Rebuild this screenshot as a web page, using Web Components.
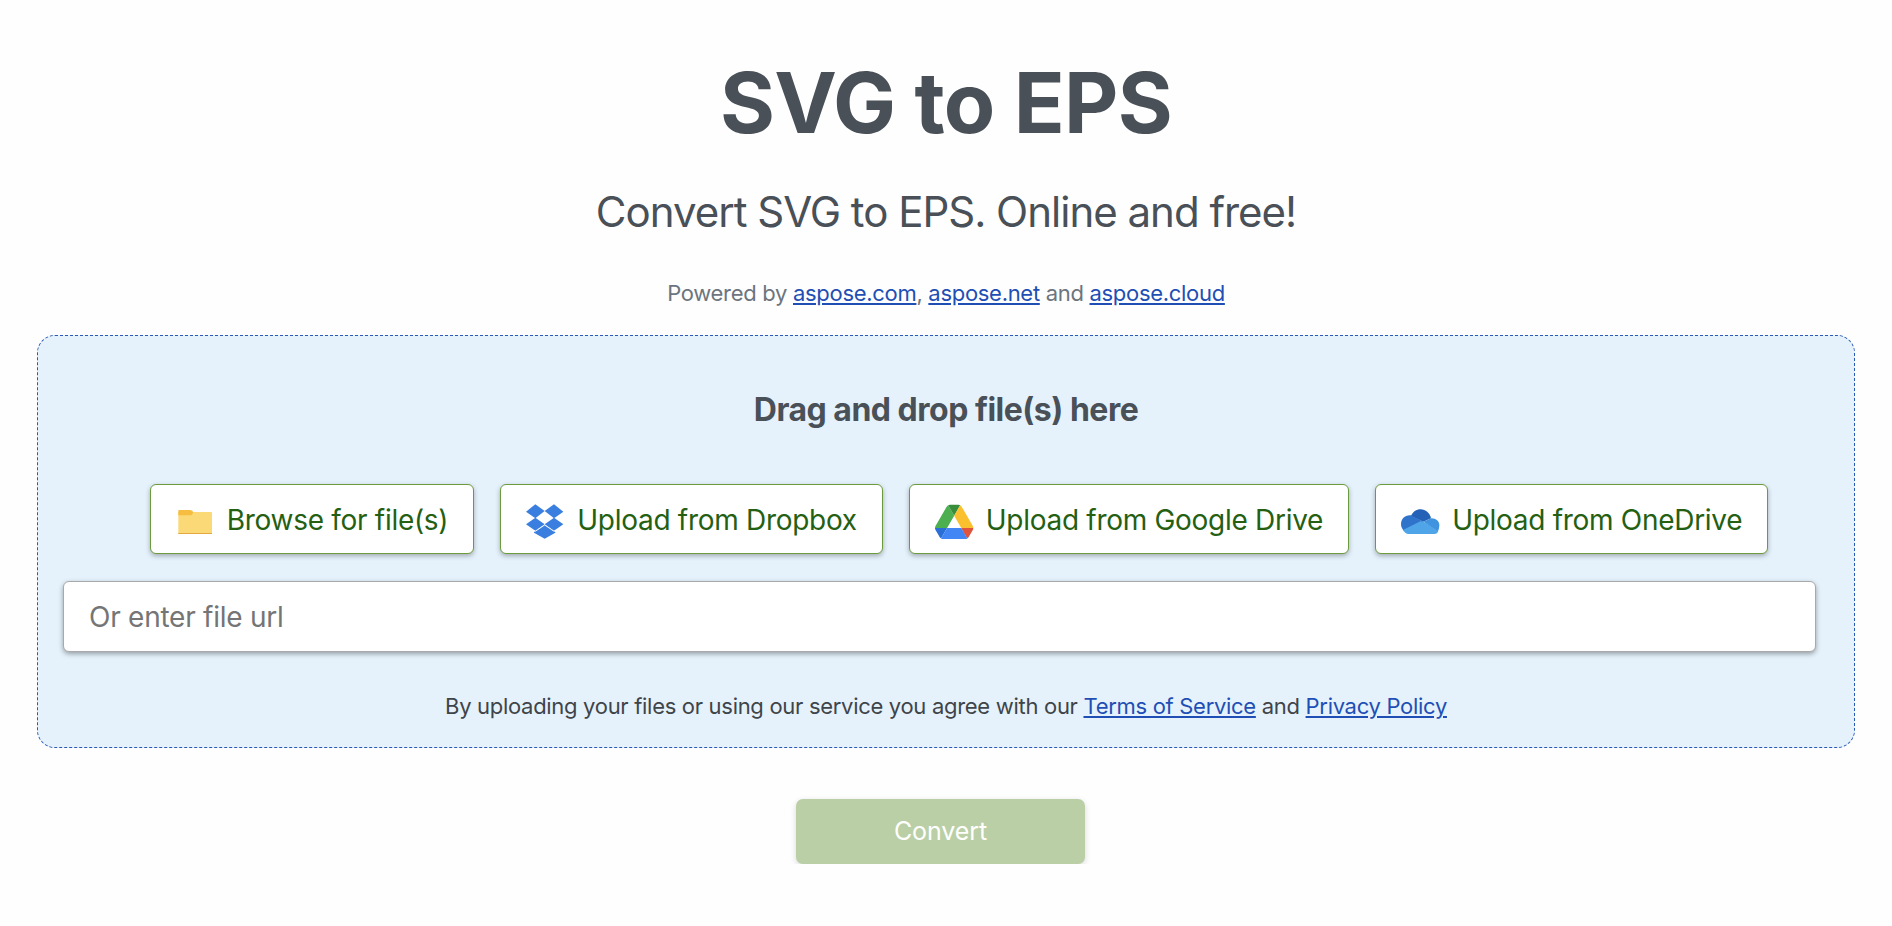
<!DOCTYPE html>
<html lang="en">
<head>
<meta charset="utf-8">
<title>SVG to EPS</title>
<style>
    html, body {
        margin: 0;
        padding: 0;
        background: #fefefe;
        font-family: Inter, "Liberation Sans", sans-serif;
    }
</style>
</head>
<body>
<conv-app></conv-app>

<script>
const LINK_COLOR = '#1f4fb4';

class PageHead extends HTMLElement {
    constructor() {
        super();
        this.shadow = this.attachShadow({mode: 'open'});
    }

    connectedCallback() {
        this.shadow.innerHTML = `
            <style>
                :host {
                    display: block;
                    padding-top: 55px;
                    text-align: center;
                    color: #495057;
                }

                h1 {
                    margin: 0;
                    font-size: 84px;
                    line-height: 96px;
                    font-weight: 700;
                    letter-spacing: -.7px;
                }

                h2 {
                    margin: 33px 0 0;
                    font-size: 42px;
                    line-height: 56px;
                    font-weight: 400;
                    letter-spacing: -1px;
                }

                p {
                    margin: 38px 0 0;
                    font-size: 22px;
                    line-height: 30px;
                    letter-spacing: -.3px;
                    color: #6c757d;
                }

                a {
                    color: ${LINK_COLOR};
                }
            </style>

            <h1>SVG to EPS</h1>
            <h2>Convert SVG to EPS. Online and free!</h2>
            <p>Powered by <a href="#">aspose.com</a>, <a href="#">aspose.net</a> and <a href="#">aspose.cloud</a></p>
        `;
    }
}

class UploadButton extends HTMLElement {
    constructor() {
        super();
        this.shadow = this.attachShadow({mode: 'open'});
    }

    connectedCallback() {
        this.shadow.innerHTML = `
            <style>
                :host {
                    display: flex;
                    align-items: center;
                    gap: 12px;
                    box-sizing: border-box;
                    height: 70px;
                    margin-left: 26px;
                    padding: 2px 25px 0 24px;
                    background: #fff;
                    border: 1px solid #6a9c3f;
                    border-radius: 6px;
                    box-shadow: 0 2px 5px rgba(0, 0, 0, .3);
                    color: #255f12;
                    font-size: 28px;
                    letter-spacing: -.29px;
                    white-space: nowrap;
                }

                ::slotted(svg) {
                    width: 40px;
                    height: 40px;
                    margin-top: 4px;
                    flex: none;
                }
            </style>

            <slot name="icon"></slot>
            <slot></slot>
        `;
    }
}

class UrlInput extends HTMLElement {
    constructor() {
        super();
        this.shadow = this.attachShadow({mode: 'open'});
    }

    connectedCallback() {
        this.shadow.innerHTML = `
            <style>
                :host {
                    display: block;
                    margin-right: 13px;
                }

                input {
                    display: block;
                    box-sizing: border-box;
                    width: 100%;
                    height: 71px;
                    padding: 0 25px;
                    background: #fff;
                    border: 1px solid #a9a9a9;
                    border-radius: 6px;
                    box-shadow: 0 2px 5px rgba(0, 0, 0, .35);
                    font: 28px Inter, sans-serif;
                    letter-spacing: -.25px;
                    outline: none;
                }

                input::placeholder {
                    color: #757575;
                    opacity: 1;
                }
            </style>

            <input type="text" placeholder="${this.getAttribute('placeholder')}">
        `;
    }
}

class DropZone extends HTMLElement {
    constructor() {
        super();
        this.shadow = this.attachShadow({mode: 'open'});
    }

    connectedCallback() {
        this.shadow.innerHTML = `
            <style>
                :host {
                    display: block;
                    box-sizing: border-box;
                    height: 413px;
                    margin: 27px 37px 0;
                    padding: 54px 25px 0;
                    background: #e5f2fc;
                    border: 1px dashed #2a5ab5;
                    border-radius: 18px;
                    text-align: center;
                }

                h3 {
                    margin: 0 0 54px;
                    font-size: 32px;
                    line-height: 40px;
                    font-weight: 700;
                    letter-spacing: -.5px;
                    color: #495057;
                }

                .buttons {
                    display: flex;
                    justify-content: center;
                    margin-bottom: 27px;
                }

                p {
                    margin: 39px 0 0;
                    font-size: 22px;
                    line-height: 30px;
                    letter-spacing: -.3px;
                    color: #3f4449;
                }

                a {
                    color: ${LINK_COLOR};
                }
            </style>

            <h3>Drag and drop file(s) here</h3>
            <div class="buttons"><slot></slot></div>
            <url-input placeholder="Or enter file url"></url-input>
            <p>By uploading your files or using our service you agree with our <a href="#">Terms of Service</a> and <a href="#">Privacy Policy</a></p>
        `;
    }
}

class ConvertButton extends HTMLElement {
    constructor() {
        super();
        this.shadow = this.attachShadow({mode: 'open'});
    }

    connectedCallback() {
        this.shadow.innerHTML = `
            <style>
                :host {
                    display: flex;
                    justify-content: center;
                    margin-top: 51px;
                    padding-right: 11px;
                }

                button {
                    width: 289px;
                    height: 65px;
                    padding: 0 0 2px;
                    background: #bacfa5;
                    border: 0;
                    border-radius: 7px;
                    box-shadow: 0 2px 6px rgba(0, 0, 0, .15);
                    color: #fff;
                    font: 25px Inter, sans-serif;
                    letter-spacing: -.1px;
                }
            </style>

            <button type="button"><slot></slot></button>
        `;
    }
}

class ConvApp extends HTMLElement {
    constructor() {
        super();
        this.shadow = this.attachShadow({mode: 'open'});
    }

    connectedCallback() {
        this.shadow.innerHTML = `
            <style>
                :host {
                    display: block;
                }
            </style>

            <page-head></page-head>
            <drop-zone>
                <upload-button>
                    <svg slot="icon" viewBox="45 36 120 120" xmlns="http://www.w3.org/2000/svg">
                        <path d="M55 66h98q3 0 3 3v63H55z" fill="#fbd976"/>
                        <path d="M55 62q0-2 2-2h33q7 0 10 7-3 9-10 9H55z" fill="#f6bd41"/>
                        <path d="M55 129h101v3H55z" fill="#e3a73f"/>
                    </svg>
                    Browse for file(s)
                </upload-button>
                <upload-button>
                    <svg slot="icon" viewBox="45 36 120 120" xmlns="http://www.w3.org/2000/svg">
                        <g fill="#3a7fe0">
                            <path d="M48 65l28-22 28 20-28 22z"/>
                            <path d="M104 63l28-20 28 22-28 20z"/>
                            <path d="M48 103l28-20 28 20-28 19z"/>
                            <path d="M104 103l28-20 28 20-28 19z"/>
                            <path d="M72 126l32-21 32 21v2l-32 18-32-18z"/>
                        </g>
                        <path d="M72 121l4 3 28-19 28 19 4-3" fill="none" stroke="#fff" stroke-width="2.5"/>
                    </svg>
                    Upload from Dropbox
                </upload-button>
                <upload-button>
                    <svg slot="icon" viewBox="39 36 120 120" xmlns="http://www.w3.org/2000/svg">
                        <g transform="translate(42 44) scale(1.317)">
                            <path d="m6.6 66.85 3.85 6.65c.8 1.4 1.95 2.5 3.3 3.3l13.75-23.8h-27.5c0 1.55.4 3.1 1.2 4.5z" fill="#2a6fd6"/>
                            <path d="m43.65 25-13.75-23.8c-1.35.8-2.5 1.9-3.3 3.3l-25.4 44a9.06 9.06 0 0 0 -1.2 4.5h27.5z" fill="#4caf50"/>
                            <path d="m73.55 76.8c1.35-.8 2.5-1.9 3.3-3.3l1.6-2.75 7.65-13.25c.8-1.4 1.2-2.95 1.2-4.5h-27.502l5.852 11.5z" fill="#e0533d"/>
                            <path d="m43.65 25 13.75-23.8c-1.35-.8-2.9-1.2-4.5-1.2h-18.5c-1.6 0-3.15.45-4.5 1.2z" fill="#388e3c"/>
                            <path d="m59.8 53h-32.3l-13.75 23.8c1.35.8 2.9 1.2 4.5 1.2h50.8c1.6 0 3.15-.45 4.5-1.2z" fill="#4285f4"/>
                            <path d="m73.4 26.5-12.7-22c-.8-1.4-1.95-2.5-3.3-3.3l-13.75 23.8 16.15 28h27.45c0-1.55-.4-3.1-1.2-4.5z" fill="#fbc02d"/>
                        </g>
                    </svg>
                    Upload from Google Drive
                </upload-button>
                <upload-button>
                    <svg slot="icon" viewBox="42 36 120 120" xmlns="http://www.w3.org/2000/svg">
                        <path d="M75 78C80 66 91 58 104 58c15 0 27 11 31 27l-23 10-36-16z" fill="#2362b6"/>
                        <path d="M75 76C58 74 45 86 45 102c0 9 4 17 10 21l57-28z" fill="#2f73ca"/>
                        <path d="M112 95l23-10c14-1 25 8 25 21 0 7-2 14-5 19z" fill="#3f93df"/>
                        <path d="M51 120l52-26 9 1 45 28c-2 6-6 9-12 9H68c-8 0-13-5-17-12z" fill="#4fa5e8"/>
                    </svg>
                    Upload from OneDrive
                </upload-button>
            </drop-zone>
            <convert-button>Convert</convert-button>
        `;
    }
}

customElements.define('page-head', PageHead);
customElements.define('upload-button', UploadButton);
customElements.define('url-input', UrlInput);
customElements.define('drop-zone', DropZone);
customElements.define('convert-button', ConvertButton);
customElements.define('conv-app', ConvApp);
</script>
</body>
</html>
